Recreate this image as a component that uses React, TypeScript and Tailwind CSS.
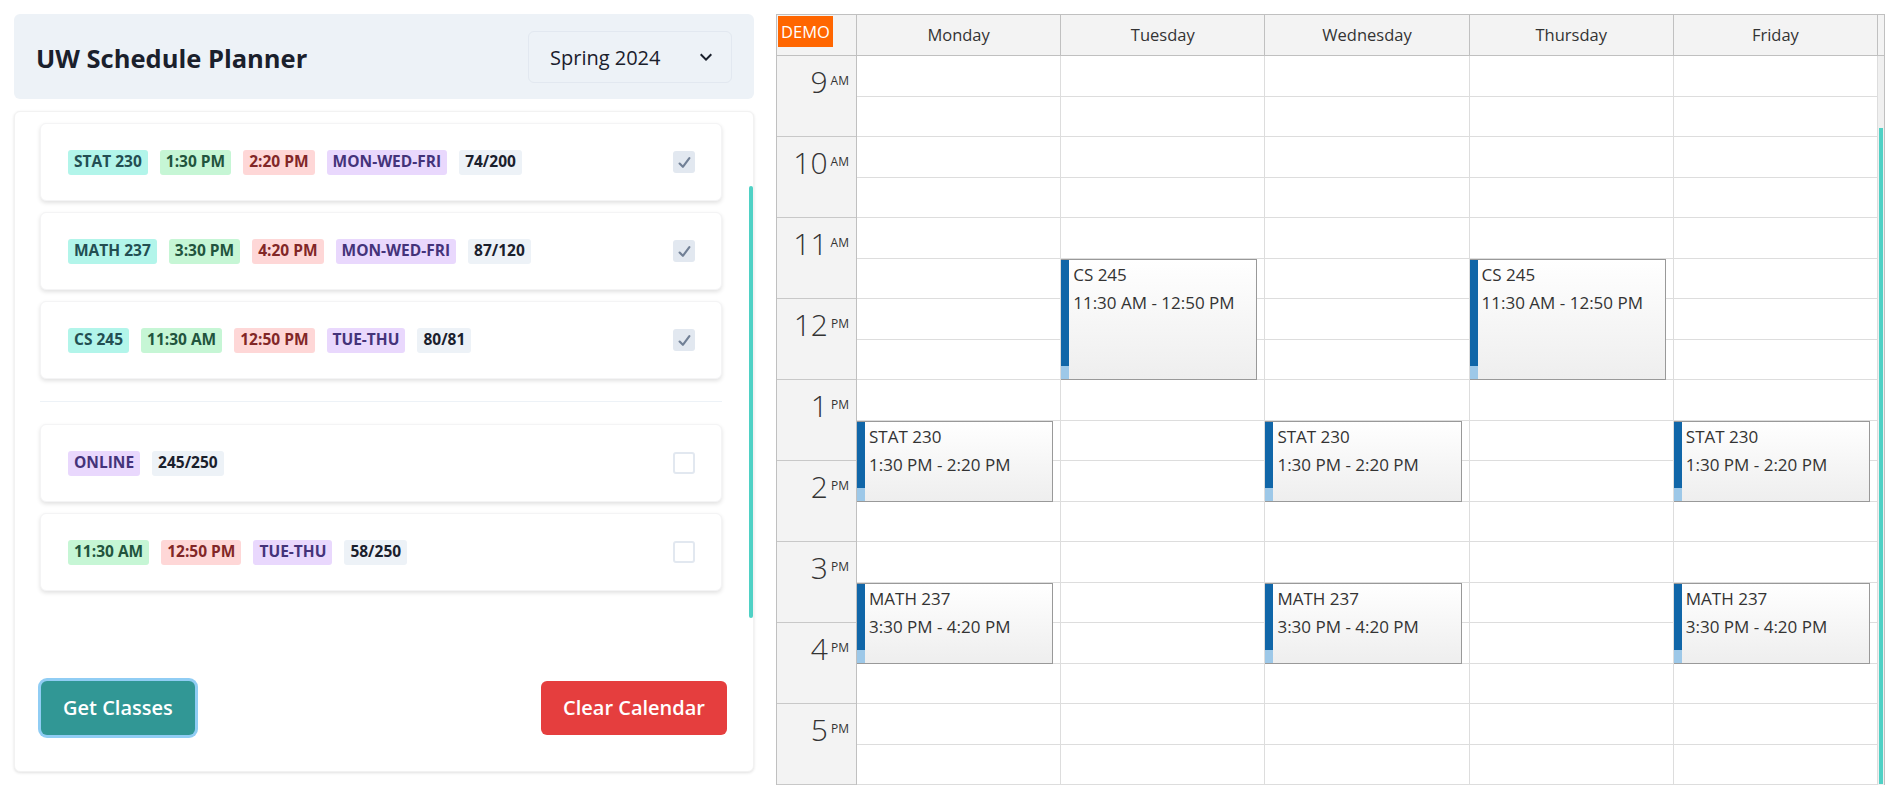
const tones = {
  teal: "bg-[#b2f5ea] text-[#234e52]",
  green: "bg-[#c6f6d5] text-[#22543d]",
  red: "bg-[#fed7d7] text-[#822727]",
  purple: "bg-[#e9d8fd] text-[#44337a]",
  gray: "bg-[#edf2f7] text-[#1a202c]",
};

type Tone = keyof typeof tones;

const selected: { tags: [string, Tone][]; checked: boolean }[] = [
  {
    tags: [
      ["STAT 230", "teal"],
      ["1:30 PM", "green"],
      ["2:20 PM", "red"],
      ["MON-WED-FRI", "purple"],
      ["74/200", "gray"],
    ],
    checked: true,
  },
  {
    tags: [
      ["MATH 237", "teal"],
      ["3:30 PM", "green"],
      ["4:20 PM", "red"],
      ["MON-WED-FRI", "purple"],
      ["87/120", "gray"],
    ],
    checked: true,
  },
  {
    tags: [
      ["CS 245", "teal"],
      ["11:30 AM", "green"],
      ["12:50 PM", "red"],
      ["TUE-THU", "purple"],
      ["80/81", "gray"],
    ],
    checked: true,
  },
];

const others: { tags: [string, Tone][]; checked: boolean }[] = [
  {
    tags: [
      ["ONLINE", "purple"],
      ["245/250", "gray"],
    ],
    checked: false,
  },
  {
    tags: [
      ["11:30 AM", "green"],
      ["12:50 PM", "red"],
      ["TUE-THU", "purple"],
      ["58/250", "gray"],
    ],
    checked: false,
  },
];

const days = ["Monday", "Tuesday", "Wednesday", "Thursday", "Friday"];

const hours = [
  ["9", "AM"],
  ["10", "AM"],
  ["11", "AM"],
  ["12", "PM"],
  ["1", "PM"],
  ["2", "PM"],
  ["3", "PM"],
  ["4", "PM"],
  ["5", "PM"],
];

// half-hour slots counted from 9:00; s = start slot, e = end slot, fill = share of the box the class really lasts
const events = [
  { days: [1, 3], title: "CS 245", time: "11:30 AM - 12:50 PM", s: 5, e: 8, fill: 80 / 90 },
  { days: [0, 2, 4], title: "STAT 230", time: "1:30 PM - 2:20 PM", s: 9, e: 11, fill: 50 / 60 },
  { days: [0, 2, 4], title: "MATH 237", time: "3:30 PM - 4:20 PM", s: 13, e: 15, fill: 50 / 60 },
];

// y of the grid line closing half-hour k (hour = 81px: 41 + 40)
function lineY(k: number) {
  return k % 2 === 0 ? (k / 2) * 81 - 1 : ((k - 1) / 2) * 81 + 40;
}

function Checkbox({ checked }: { checked: boolean }) {
  if (!checked) {
    return <span className="h-[22px] w-[22px] rounded-[3px] border-2 border-[#e2e8f0] bg-white" />;
  }
  return (
    <span className="flex h-[22px] w-[22px] items-center justify-center rounded-[3px] bg-[#e2e8f0]">
      <svg viewBox="0 0 12 10" className="h-[11px] w-[13px]" fill="none">
        <polyline
          points="1.5 6 4.5 9 10.5 1"
          stroke="#718096"
          strokeWidth="2"
          strokeLinecap="round"
          strokeLinejoin="round"
        />
      </svg>
    </span>
  );
}

function ClassRow({ tags, checked }: { tags: [string, Tone][]; checked: boolean }) {
  return (
    <div className="flex h-[78px] items-center justify-between rounded-md border border-[#f4f4f5] bg-white pl-[27px] pr-[26px] shadow-[0_2px_4px_0_rgba(0,0,0,0.12)]">
      <div className="flex items-center gap-3">
        {tags.map(([text, tone]) => (
          <span
            key={text}
            className={`flex h-[25px] items-center rounded-[3px] px-[6px] text-[15.5px] font-bold uppercase ${tones[tone]}`}
          >
            {text}
          </span>
        ))}
      </div>
      <Checkbox checked={checked} />
    </div>
  );
}

function Planner() {
  return (
    <div className="flex w-[740px] flex-col gap-3 font-['Open_Sans',sans-serif] text-[#1a202c]">
      <div className="flex h-[85px] items-center justify-between rounded-md bg-[#edf2f7] px-[22px]">
        <h1 className="pt-[4px] text-[25.5px] font-bold">UW Schedule Planner</h1>
        <div className="flex h-[52px] w-[204px] items-center justify-between rounded-md border border-[#e2e8f0] pl-[21px] pr-[13px]">
          <span className="pt-[2px] text-[20px]">Spring 2024</span>
          <svg viewBox="0 0 24 24" className="h-6 w-6" fill="#1a202c">
            <path d="M16.59 8.59L12 13.17 7.41 8.59 6 10l6 6 6-6z" />
          </svg>
        </div>
      </div>

      <div className="flex h-[661px] flex-col justify-between rounded-md border border-[#f2f2f2] bg-white shadow-[0_1px_3px_0_rgba(0,0,0,0.12)]">
        <div className="flex">
          <div className="flex flex-1 flex-col gap-[11px] pl-[25px] pr-[27px] pt-[11px]">
            {selected.map((c, i) => (
              <ClassRow key={i} tags={c.tags} checked={c.checked} />
            ))}
            <div className="my-[11px] h-px bg-[#edf2f7]" />
            {others.map((c, i) => (
              <ClassRow key={i} tags={c.tags} checked={c.checked} />
            ))}
          </div>
          <div className="w-[4px]">
            <div className="mt-[74px] h-[432px] rounded-full bg-[#4fd1c5]" />
          </div>
        </div>

        <div className="flex items-center justify-between px-[26px] pb-[36px]">
          <button className="h-[54px] rounded-md bg-[#319795] px-[22px] text-[20px] font-semibold text-white ring-[3px] ring-[#90cdf4]">
            Get Classes
          </button>
          <button className="h-[54px] rounded-md bg-[#e53e3e] px-[22px] text-[20px] font-semibold text-white">
            Clear Calendar
          </button>
        </div>
      </div>
    </div>
  );
}

function Calendar() {
  return (
    <div className="w-[1109px] border-x border-t border-[#c0c0c0] font-['Open_Sans',sans-serif] text-[#333]">
      <div className="flex h-[41px] border-b border-[#c0c0c0] bg-[#f3f3f3]">
        <div className="w-[80px] border-r border-[#c0c0c0] pl-px pt-px">
          <span className="inline-block h-[31px] bg-[#ff6600] px-[3px] text-[16.5px] leading-[31px] text-white">
            DEMO
          </span>
        </div>
        {days.map((d) => (
          <div
            key={d}
            className="flex flex-1 items-center justify-center border-r border-[#c0c0c0] text-[16.5px]"
          >
            {d}
          </div>
        ))}
        <div className="w-[6px]" />
      </div>

      <div className="flex h-[729px] overflow-hidden">
        <div className="w-[80px] border-r border-[#c0c0c0] bg-[#f3f3f3]">
          {hours.map(([h, m]) => (
            <div key={h} className="flex h-[81px] items-start justify-end border-b border-[#c8c8c8] pr-[7px] pt-[11px]">
              <span className="text-[30px] font-light leading-none">{h}</span>
              <span className="ml-[3px] mt-[8px] text-[12px] leading-none">{m}</span>
            </div>
          ))}
        </div>

        {days.map((d, di) => (
          <div key={d} className="relative flex-1 border-r border-[#ddd]">
            {hours.map(([h]) => (
              <div key={h}>
                <div className="h-[41px] border-b border-[#ddd]" />
                <div className="h-[40px] border-b border-[#ddd]" />
              </div>
            ))}
            {events
              .filter((ev) => ev.days.includes(di))
              .map((ev) => {
                const top = lineY(ev.s) + 1;
                const height = lineY(ev.e) - top + 1;
                return (
                  <div
                    key={ev.title}
                    className="absolute left-0 right-[7px] flex border-y border-r border-[#999] bg-linear-to-b from-white to-[#eee]"
                    style={{ top, height }}
                  >
                    <div className="flex w-[8px] flex-col bg-[#9dc8e8]">
                      <div className="bg-[#1066a8]" style={{ height: Math.round((height - 2) * ev.fill) }} />
                    </div>
                    <div className="pl-[4px] pt-px text-[17px] leading-[28px]">
                      <div>{ev.title}</div>
                      <div>{ev.time}</div>
                    </div>
                  </div>
                );
              })}
          </div>
        ))}

        <div className="w-[6px] bg-[#f0f0f0] px-px pt-[72px]">
          <div className="h-[656px] bg-[#4fd1c5]" />
        </div>
      </div>
    </div>
  );
}

export default function App() {
  return (
    <div className="flex h-[796px] w-[1903px] items-start gap-[22px] overflow-hidden bg-white pl-[14px] pt-[14px]">
      <Planner />
      <Calendar />
    </div>
  );
}
